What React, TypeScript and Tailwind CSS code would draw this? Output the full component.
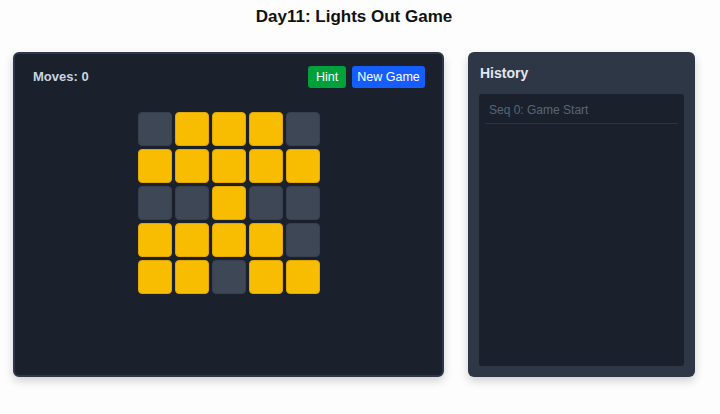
const board: number[][] = [
  [0, 1, 1, 1, 0],
  [1, 1, 1, 1, 1],
  [0, 0, 1, 0, 0],
  [1, 1, 1, 1, 0],
  [1, 1, 0, 1, 1],
];

const App = () => {
  return (
    <div className="min-h-[414px] w-[720px] bg-[#fdfdfd] pt-[6px] font-['Liberation_Sans',Arial,sans-serif]">
      <div className="w-[708px]">
        <h1 className="text-center text-[17px] leading-[22px] font-bold text-[#111]">Day11: Lights Out Game</h1>
        <div className="mt-[24px] flex pl-[13px]">
          {/* game panel */}
          <div className="flex h-[325px] w-[431px] flex-col rounded-[6px] border-2 border-[#2d3748] bg-[#1a202c] pt-[12px] pr-[17px] pl-[18px] shadow-[0_4px_10px_rgba(0,0,0,0.18)]">
            <div className="flex h-[22px] items-center justify-between">
              <div className="text-[13px] font-bold text-[#cbd5e0]">Moves: 0</div>
              <div className="flex gap-[6px]">
                <button className="h-[22px] w-[38px] rounded-[3px] bg-[#00a03a] text-[12.5px] text-white">Hint</button>
                <button className="h-[22px] w-[73px] rounded-[3px] bg-[#155dfc] text-[12.5px] text-white">New Game</button>
              </div>
            </div>
            <div className="mt-[24px] flex justify-center pr-[1px]">
              <div className="grid grid-cols-5 gap-[3px]">
                {board.map((row, r) =>
                  row.map((cell, c) => (
                    <div
                      key={`${r}-${c}`}
                      className={
                        cell
                          ? "h-[34px] w-[34px] rounded-[4px] border border-[#e0a800] bg-[#f8bc00]"
                          : "h-[34px] w-[34px] rounded-[4px] border border-[#364050] bg-[#3d4756]"
                      }
                    />
                  ))
                )}
              </div>
            </div>
          </div>

          {/* history */}
          <div className="ml-[24px] flex h-[325px] w-[227px] flex-col rounded-[6px] bg-[#2e3746] p-[11px] shadow-[0_4px_10px_rgba(0,0,0,0.18)]">
            <div className="pl-[1px] text-[14px] leading-[20px] font-bold text-[#e2e8f0]">History</div>
            <div className="mt-[11px] flex-1 rounded-[3px] bg-[#1a212d] px-[6px] pt-[8px]">
              <div className="border-b border-[#2a3340] pb-[5px] pl-[4px] text-[12px] leading-[16px] text-[#5b6575]">Seq 0: Game Start</div>
            </div>
          </div>
        </div>
      </div>
    </div>
  );
};

export default App;
